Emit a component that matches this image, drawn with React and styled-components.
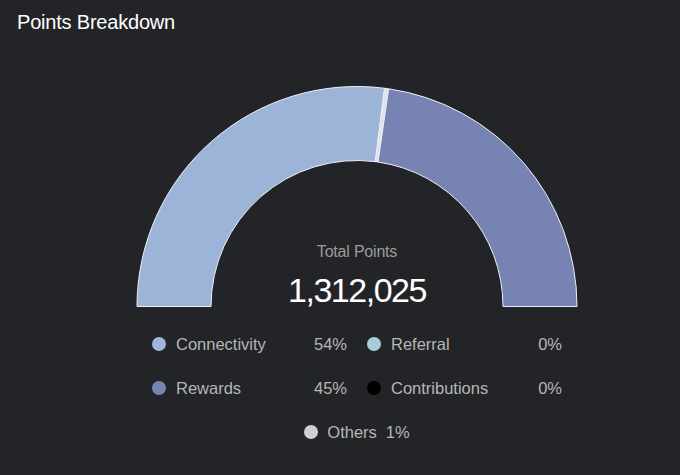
import React from "react";
import styled, { createGlobalStyle } from "styled-components";

const GlobalStyle = createGlobalStyle`
    html, body {
        margin: 0;
        padding: 0;
        background: #232428;
    }
    body {
        font-family: "Liberation Sans", Arial, sans-serif;
    }
`;

const Card = styled.section`
    width: 680px;
    height: 475px;
    box-sizing: border-box;
    padding-top: 10px;
    background: #232428;
    overflow: hidden;
`;

const Title = styled.h2`
    margin: 0;
    padding-left: 17px;
    font-size: 20px;
    line-height: 24px;
    font-weight: 400;
    letter-spacing: -0.2px;
    color: #ffffff;
`;

const Body = styled.div`
    display: flex;
    flex-direction: column;
    align-items: center;
    padding-left: 34px;
    margin-top: 52px;
`;

const GaugeWrap = styled.div`
    position: relative;
    width: 442px;
    height: 222px;

    svg {
        display: block;
    }
`;

const CenterLabel = styled.div`
    position: absolute;
    left: 0;
    right: 0;
    bottom: 0;
    display: flex;
    flex-direction: column;
    align-items: center;
`;

const Caption = styled.div`
    font-size: 16px;
    line-height: 18px;
    color: #9c9c9c;
    letter-spacing: -0.2px;
`;

const Total = styled.div`
    margin-top: 11px;
    font-size: 34px;
    line-height: 36px;
    color: #ffffff;
    letter-spacing: -1.5px;
`;

const Legend = styled.div`
    display: grid;
    grid-template-columns: 195px 195px;
    column-gap: 20px;
    row-gap: 20px;
    margin-top: 24px;
`;

const Item = styled.div`
    display: flex;
    align-items: center;
    height: 24px;
    font-size: 16.5px;
    color: #b6b6b6;
`;

const Dot = styled.span`
    width: 14px;
    height: 14px;
    border-radius: 50%;
    background: ${(p) => p.color};
    margin-right: ${(p) => (p.tight ? "9px" : "10px")};
    flex-shrink: 0;
`;

const Label = styled.span`
    flex: 1;
`;

const Pct = styled.span``;

const OthersRow = styled(Item)`
    margin-top: 20px;

    ${Label} {
        flex: none;
        margin-right: 9px;
    }
`;

const CX = 221;
const CY = 220.5;
const R = 220;
const r = 146;

const pt = (rad, f) => {
    const a = Math.PI * (1 - f);
    return [CX + rad * Math.cos(a), CY - rad * Math.sin(a)];
};

const arc = (from, to) => {
    const [x1, y1] = pt(R, from);
    const [x2, y2] = pt(R, to);
    const [x3, y3] = pt(r, to);
    const [x4, y4] = pt(r, from);
    return `M${x1} ${y1} A${R} ${R} 0 0 1 ${x2} ${y2} L${x3} ${y3} A${r} ${r} 0 0 0 ${x4} ${y4} Z`;
};

const segments = [
    { from: 0, to: 0.54, color: "#9cb4d8" },
    { from: 0.54, to: 0.546, color: "#dfe4ec" },
    { from: 0.546, to: 1, color: "#7784b3" },
];

const legend = [
    { name: "Connectivity", pct: "54%", color: "#9fb5da" },
    { name: "Referral", pct: "0%", color: "#a8cdd7" },
    { name: "Rewards", pct: "45%", color: "#7784b3" },
    { name: "Contributions", pct: "0%", color: "#000000" },
];

const App = () => {
    return (
        <>
            <GlobalStyle />
            <Card>
                <Title>Points Breakdown</Title>
                <Body>
                    <GaugeWrap>
                        <svg width="442" height="222" viewBox="0 0 442 222">
                            {segments.map((s, i) => (
                                <path key={i} d={arc(s.from, s.to)} fill={s.color} stroke="#eef0f4" strokeWidth="1" strokeLinejoin="round" />
                            ))}
                        </svg>
                        <CenterLabel>
                            <Caption>Total Points</Caption>
                            <Total>1,312,025</Total>
                        </CenterLabel>
                    </GaugeWrap>
                    <Legend>
                        {legend.map((l) => (
                            <Item key={l.name}>
                                <Dot color={l.color} />
                                <Label>{l.name}</Label>
                                <Pct>{l.pct}</Pct>
                            </Item>
                        ))}
                    </Legend>
                    <OthersRow>
                        <Dot color="#cfd1d1" tight />
                        <Label>Others</Label>
                        <Pct>1%</Pct>
                    </OthersRow>
                </Body>
            </Card>
        </>
    );
};

export default App;
